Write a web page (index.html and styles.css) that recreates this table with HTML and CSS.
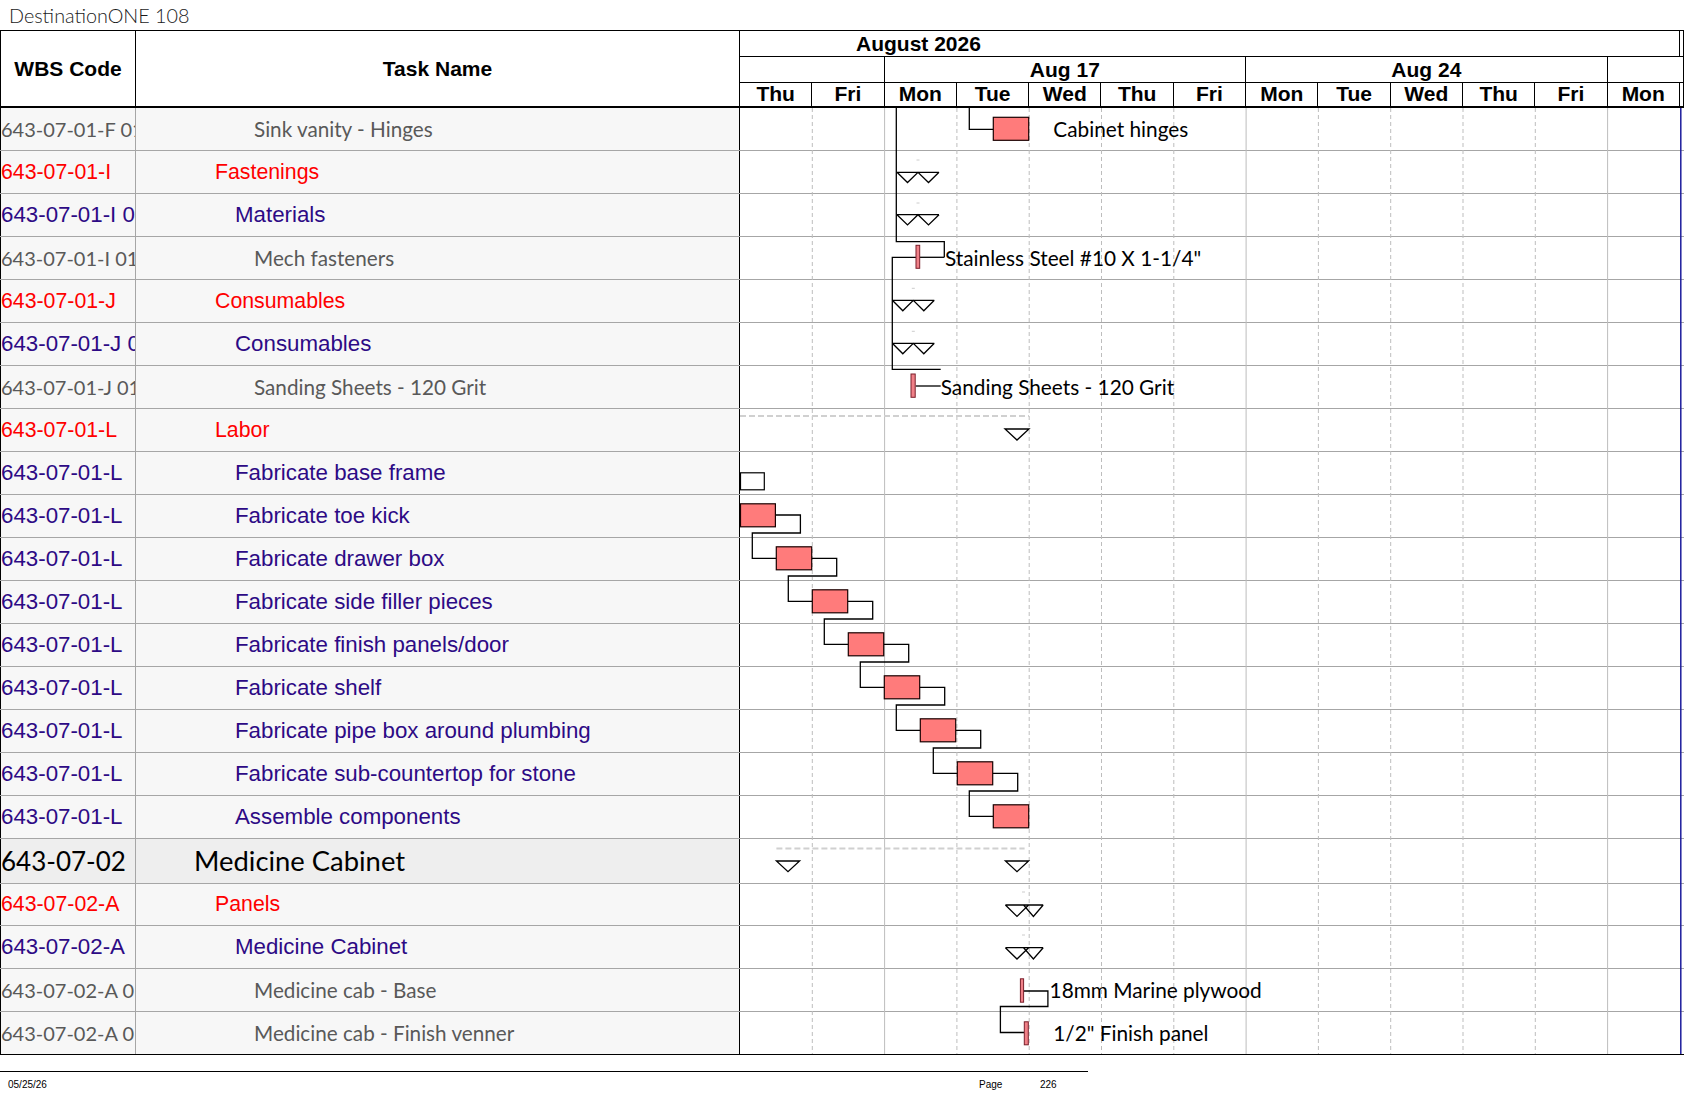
FILE: index.html
```html
<!DOCTYPE html>
<html lang="en">
<head>
<meta charset="utf-8">
<title>DestinationONE 108</title>
<link rel="stylesheet" href="styles.css">
</head>
<body>
<div class="title">DestinationONE 108</div>
<div class="sheet">
  <div class="head">
    <div class="h-wbs">WBS Code</div>
    <div class="h-task">Task Name</div>
    <div class="h-time">
      <div class="tier month">
        <div class="tc month-cell">August 2026</div>
        <div class="tc"></div>
      </div>
      <div class="tier weeks">
        <div class="tc"></div>
        <div class="tc">Aug 17</div>
        <div class="tc">Aug 24</div>
        <div class="tc"></div>
      </div>
      <div class="tier days">
        <div class="tc">Thu</div><div class="tc">Fri</div><div class="tc">Mon</div><div class="tc">Tue</div><div class="tc">Wed</div><div class="tc">Thu</div><div class="tc">Fri</div><div class="tc">Mon</div><div class="tc">Tue</div><div class="tc">Wed</div><div class="tc">Thu</div><div class="tc">Fri</div><div class="tc">Mon</div><div class="tc"></div>
      </div>
    </div>
  </div>
  <div class="rows">
    <div class="row lv-gray"><div class="c-wbs">643-07-01-F 01</div><div class="c-task">Sink vanity - Hinges</div><div class="c-gantt"></div></div>
    <div class="row lv-red"><div class="c-wbs">643-07-01-I</div><div class="c-task">Fastenings</div><div class="c-gantt"></div></div>
    <div class="row lv-purple"><div class="c-wbs">643-07-01-I 01</div><div class="c-task">Materials</div><div class="c-gantt"></div></div>
    <div class="row lv-gray"><div class="c-wbs">643-07-01-I 01</div><div class="c-task">Mech fasteners</div><div class="c-gantt"></div></div>
    <div class="row lv-red"><div class="c-wbs">643-07-01-J</div><div class="c-task">Consumables</div><div class="c-gantt"></div></div>
    <div class="row lv-purple"><div class="c-wbs">643-07-01-J 01</div><div class="c-task">Consumables</div><div class="c-gantt"></div></div>
    <div class="row lv-gray"><div class="c-wbs">643-07-01-J 01</div><div class="c-task">Sanding Sheets - 120 Grit</div><div class="c-gantt"></div></div>
    <div class="row lv-red"><div class="c-wbs">643-07-01-L</div><div class="c-task">Labor</div><div class="c-gantt"></div></div>
    <div class="row lv-purple"><div class="c-wbs">643-07-01-L</div><div class="c-task">Fabricate base frame</div><div class="c-gantt"></div></div>
    <div class="row lv-purple"><div class="c-wbs">643-07-01-L</div><div class="c-task">Fabricate toe kick</div><div class="c-gantt"></div></div>
    <div class="row lv-purple"><div class="c-wbs">643-07-01-L</div><div class="c-task">Fabricate drawer box</div><div class="c-gantt"></div></div>
    <div class="row lv-purple"><div class="c-wbs">643-07-01-L</div><div class="c-task">Fabricate side filler pieces</div><div class="c-gantt"></div></div>
    <div class="row lv-purple"><div class="c-wbs">643-07-01-L</div><div class="c-task">Fabricate finish panels/door</div><div class="c-gantt"></div></div>
    <div class="row lv-purple"><div class="c-wbs">643-07-01-L</div><div class="c-task">Fabricate shelf</div><div class="c-gantt"></div></div>
    <div class="row lv-purple"><div class="c-wbs">643-07-01-L</div><div class="c-task">Fabricate pipe box around plumbing</div><div class="c-gantt"></div></div>
    <div class="row lv-purple"><div class="c-wbs">643-07-01-L</div><div class="c-task">Fabricate sub-countertop for stone</div><div class="c-gantt"></div></div>
    <div class="row lv-purple"><div class="c-wbs">643-07-01-L</div><div class="c-task">Assemble components</div><div class="c-gantt"></div></div>
    <div class="row lv-big"><div class="c-wbs">643-07-02</div><div class="c-task">Medicine Cabinet</div><div class="c-gantt"></div></div>
    <div class="row lv-red tail"><div class="c-wbs">643-07-02-A</div><div class="c-task">Panels</div><div class="c-gantt"></div></div>
    <div class="row lv-purple tail"><div class="c-wbs">643-07-02-A</div><div class="c-task">Medicine Cabinet</div><div class="c-gantt"></div></div>
    <div class="row lv-gray tail"><div class="c-wbs">643-07-02-A 01</div><div class="c-task">Medicine cab - Base</div><div class="c-gantt"></div></div>
    <div class="row lv-gray tail last"><div class="c-wbs">643-07-02-A 01</div><div class="c-task">Medicine cab - Finish venner</div><div class="c-gantt"></div></div>

    <svg class="chart" width="944" height="946" viewBox="0 0 944 946">
      <g class="grid-dash">
        <line x1="72.3" y1="0" x2="72.3" y2="946"/>
        <line x1="216.9" y1="0" x2="216.9" y2="946"/>
        <line x1="289.2" y1="0" x2="289.2" y2="946"/>
        <line x1="361.5" y1="0" x2="361.5" y2="946"/>
        <line x1="433.8" y1="0" x2="433.8" y2="946"/>
        <line x1="578.4" y1="0" x2="578.4" y2="946"/>
        <line x1="650.7" y1="0" x2="650.7" y2="946"/>
        <line x1="723" y1="0" x2="723" y2="946"/>
        <line x1="795.3" y1="0" x2="795.3" y2="946"/>
      </g>
      <g class="grid-solid">
        <line x1="144.6" y1="0" x2="144.6" y2="946"/>
        <line x1="506.1" y1="0" x2="506.1" y2="946"/>
        <line x1="867.6" y1="0" x2="867.6" y2="946"/>
      </g>
      <line class="edge" x1="940.8" y1="0" x2="940.8" y2="946"/>

      <!-- summary dashed bars -->
      <line class="sum" x1="0" y1="308" x2="289" y2="308"/>
      <line class="sum" x1="36.4" y1="740.5" x2="284.6" y2="740.5"/>

      <!-- tiny marks -->
      <g class="tick">
        <line x1="176.5" y1="52" x2="179.5" y2="52"/>
        <line x1="176.5" y1="95" x2="179.5" y2="95"/>
        <line x1="171.8" y1="180.3" x2="174.8" y2="180.3"/>
        <line x1="171.8" y1="223.3" x2="174.8" y2="223.3"/>
        <line x1="282" y1="784" x2="285" y2="784"/>
        <line x1="282" y1="827" x2="285" y2="827"/>
      </g>

      <!-- links -->
      <g class="link">
        <path d="M229.3,0 V21.3 H253.3"/>
        <path d="M156.3,0 V133.7 H204.3 V149.3"/>
        <path d="M179.7,149.3 H204.3"/>
        <path d="M176,149.3 H152.3 V261.3 H200.7"/>
        <path d="M175.7,278 H200.7"/>
        <path d="M35.4,407 H60.4 V425 H12.3 V450.3 H36.3"/>
        <path d="M71.7,450.3 H96.7 V468 H48.3 V493.3 H72.3"/>
        <path d="M107.7,493.3 H132.7 V511 H84.3 V536.3 H108.3"/>
        <path d="M143.7,536.3 H168.7 V554 H120.3 V579.3 H144.3"/>
        <path d="M179.7,579.3 H204.7 V597 H156.3 V622.3 H180.3"/>
        <path d="M215.7,622.3 H240.7 V640 H193.3 V665.3 H217.3"/>
        <path d="M252.7,665.3 H277.7 V683 H229.3 V708.3 H253.3"/>
        <path d="M283.6,883 H307.9 V898.5 H260.4 V924.5 H284.3"/>
      </g>

      <!-- task bars -->
      <rect class="bar" x="253.3" y="9.3" width="35.4" height="23"/>
      <rect class="hollow" x="0.5" y="364.8" width="23.8" height="17"/>
      <rect class="bar" x="0.5" y="395.8" width="34.9" height="23"/>
      <rect class="bar" x="36.3" y="438.8" width="35.4" height="23"/>
      <rect class="bar" x="72.3" y="481.8" width="35.4" height="23"/>
      <rect class="bar" x="108.3" y="524.8" width="35.4" height="23"/>
      <rect class="bar" x="144.3" y="567.8" width="35.4" height="23"/>
      <rect class="bar" x="180.3" y="610.8" width="35.4" height="23"/>
      <rect class="bar" x="217.3" y="653.8" width="35.4" height="23"/>
      <rect class="bar" x="253.3" y="696.8" width="35.4" height="23"/>

      <!-- thin bars -->
      <rect class="thin" x="176" y="137.3" width="3.7" height="23"/>
      <rect class="thin" x="171" y="266" width="4.2" height="23.3"/>
      <rect class="thin" x="280.4" y="870.8" width="3.2" height="23.4"/>
      <rect class="thin" x="284.3" y="913.8" width="4" height="23"/>

      <!-- milestones -->
      <g class="ms">
        <path d="M157,64.3 H199 M157,64.3 L167.5,74.5 L178,64.3 L188.5,74.5 L199,64.3"/>
        <path d="M157,106.7 H199 M157,106.7 L167.5,116.9 L178,106.7 L188.5,116.9 L199,106.7"/>
        <path d="M152.3,192.3 H194.3 M152.3,192.3 L162.8,202.8 L173.3,192.3 L183.8,202.8 L194.3,192.3"/>
        <path d="M152.3,235.3 H194.3 M152.3,235.3 L162.8,245.8 L173.3,235.3 L183.8,245.8 L194.3,235.3"/>
        <path class="fill" d="M265,321 H289 L277,332 Z"/>
        <path class="fill" d="M36.4,753 H59.6 L48,763.7 Z"/>
        <path class="fill" d="M265.4,753 H288.6 L277,763.7 Z"/>
        <path d="M265.4,797 H303.2 M265.4,797 L277,808.4 L288.6,797 M283.6,797 L293.4,808.4 L303.2,797"/>
        <path d="M265.4,839.7 H303.2 M265.4,839.7 L277,851 L288.6,839.7 M283.6,839.7 L293.4,851 L303.2,839.7"/>
      </g>

      <!-- labels -->
      <text class="lbl" x="313.3" y="29.3">Cabinet hinges</text>
      <text class="lbl" x="205" y="157.7">Stainless Steel #10 X 1-1/4"</text>
      <text class="lbl" x="200.7" y="287">Sanding Sheets - 120 Grit</text>
      <text class="lbl" x="309.6" y="890.2">18mm Marine plywood</text>
      <text class="lbl" x="313.2" y="933.2">1/2" Finish panel</text>
    </svg>
  </div>
</div>
<div class="footer">
  <span>05/25/26</span>
  <span>Page</span>
  <span>226</span>
</div>
</body>
</html>
```
FILE: styles.css
```css
* { box-sizing: border-box; }

body {
  margin: 0;
  background: #ffffff;
  font-family: "Liberation Sans", Arial, sans-serif;
  color: #000;
}

.title {
  height: 30px;
  padding-left: 9px;
  font-family: Lato, "Open Sans", sans-serif;
  font-weight: 300;
  font-size: 19.8px;
  line-height: 30px;
  color: #1a1a1a;
  white-space: nowrap;
}

.sheet {
  width: 1684px;
  border-top: 1px solid #000;
  border-bottom: 1px solid #000;
}

/* ---------- header ---------- */
.head {
  display: grid;
  grid-template-columns: 136px 604px 944px;
  height: 77px;
  border-bottom: 2px solid #000;
}

.h-wbs,
.h-task {
  display: flex;
  align-items: center;
  justify-content: center;
  font-weight: bold;
  font-size: 21px;
  border-right: 1px solid #000;
}

.h-wbs { border-left: 1px solid #000; }

.h-time {
  display: flex;
  flex-direction: column;
}

.tier {
  display: grid;
  height: 26px;
  border-bottom: 1px solid #000;
}

.tier.days {
  height: 23px;
  border-bottom: none;
}

.month { grid-template-columns: 939.9px 4.1px; }
.weeks { grid-template-columns: 144.6px 361.5px 361.5px 76.4px; }
.days  { grid-template-columns: repeat(13, 72.3px) 4.1px; }

.tc {
  border-right: 1px solid #000;
  font-weight: bold;
  font-size: 21px;
  line-height: 25px;
  text-align: center;
  white-space: nowrap;
  overflow: hidden;
}

.days .tc { line-height: 22px; }

.month-cell {
  text-align: left;
  padding-left: 116px;
}

/* ---------- body rows ---------- */
.rows { position: relative; }

.row {
  display: grid;
  grid-template-columns: 136px 604px 944px;
  height: 43px;
  border-bottom: 1px solid #a6a6a6;
}

.row.tail { height: 42.7px; }
.row.last { border-bottom: none; }

.c-wbs,
.c-task {
  display: flex;
  align-items: center;
  white-space: nowrap;
  overflow: hidden;
  background: #f7f7f7;
}

.c-wbs {
  border-left: 1px solid #000;
  border-right: 1px solid #a6a6a6;
}

.c-task { border-right: 1px solid #000; }

.c-gantt { background: #ffffff; }

.lv-gray .c-wbs,
.lv-gray .c-task {
  font-family: Lato, "Open Sans", sans-serif;
  color: #595959;
}
.lv-gray .c-wbs { font-size: 20px; }
.lv-gray .c-task { padding-left: 118px; font-size: 20.7px; }

.lv-red .c-wbs,
.lv-red .c-task {
  font-size: 21.3px;
  color: #ff0000;
}
.lv-red .c-task { padding-left: 79px; }

.lv-purple .c-wbs,
.lv-purple .c-task {
  font-size: 22.3px;
  color: #2d0a85;
}
.lv-purple .c-task { padding-left: 99px; }

.row.lv-big { height: 44.5px; }
.lv-big .c-wbs,
.lv-big .c-task {
  font-family: Lato, "Open Sans", sans-serif;
  color: #000;
  background: #eeeeee;
}
.lv-big .c-wbs { font-size: 26px; }
.lv-big .c-task { font-size: 27.4px; padding-left: 58px; }

/* ---------- chart canvas ---------- */
.chart {
  position: absolute;
  left: 740px;
  top: 0;
  pointer-events: none;
  overflow: visible;
}

.grid-dash line {
  stroke: #bdbdbd;
  stroke-width: 1;
  stroke-dasharray: 4 3;
}

.grid-solid line {
  stroke: #bdbdbd;
  stroke-width: 1;
}

.edge {
  stroke: #1c1c9c;
  stroke-width: 1.5;
}

.sum {
  stroke: #d0d0d0;
  stroke-width: 2;
  stroke-dasharray: 6 3;
}

.tick line {
  stroke: #cccccc;
  stroke-width: 1;
}

.link path {
  fill: none;
  stroke: #000;
  stroke-width: 1.3;
}

.bar {
  fill: #ff7b7b;
  stroke: #1a0000;
  stroke-width: 1.2;
}

.hollow {
  fill: #ffffff;
  stroke: #000;
  stroke-width: 1.2;
}

.thin {
  fill: #f08088;
  stroke: #7a1f2b;
  stroke-width: 1;
}

.ms path {
  fill: none;
  stroke: #000;
  stroke-width: 1.3;
  stroke-linejoin: miter;
}

.ms path.fill { fill: #ffffff; }

.lbl {
  font-family: Lato, "Open Sans", sans-serif;
  font-size: 20.8px;
  fill: #000;
}

/* ---------- footer ---------- */
.footer {
  width: 1088px;
  margin-top: 16px;
  border-top: 1px solid #000;
  display: grid;
  grid-template-columns: 971px 61px auto;
  padding-left: 8px;
  height: 26px;
  font-size: 10px;
  line-height: 26px;
  color: #000;
}
```
